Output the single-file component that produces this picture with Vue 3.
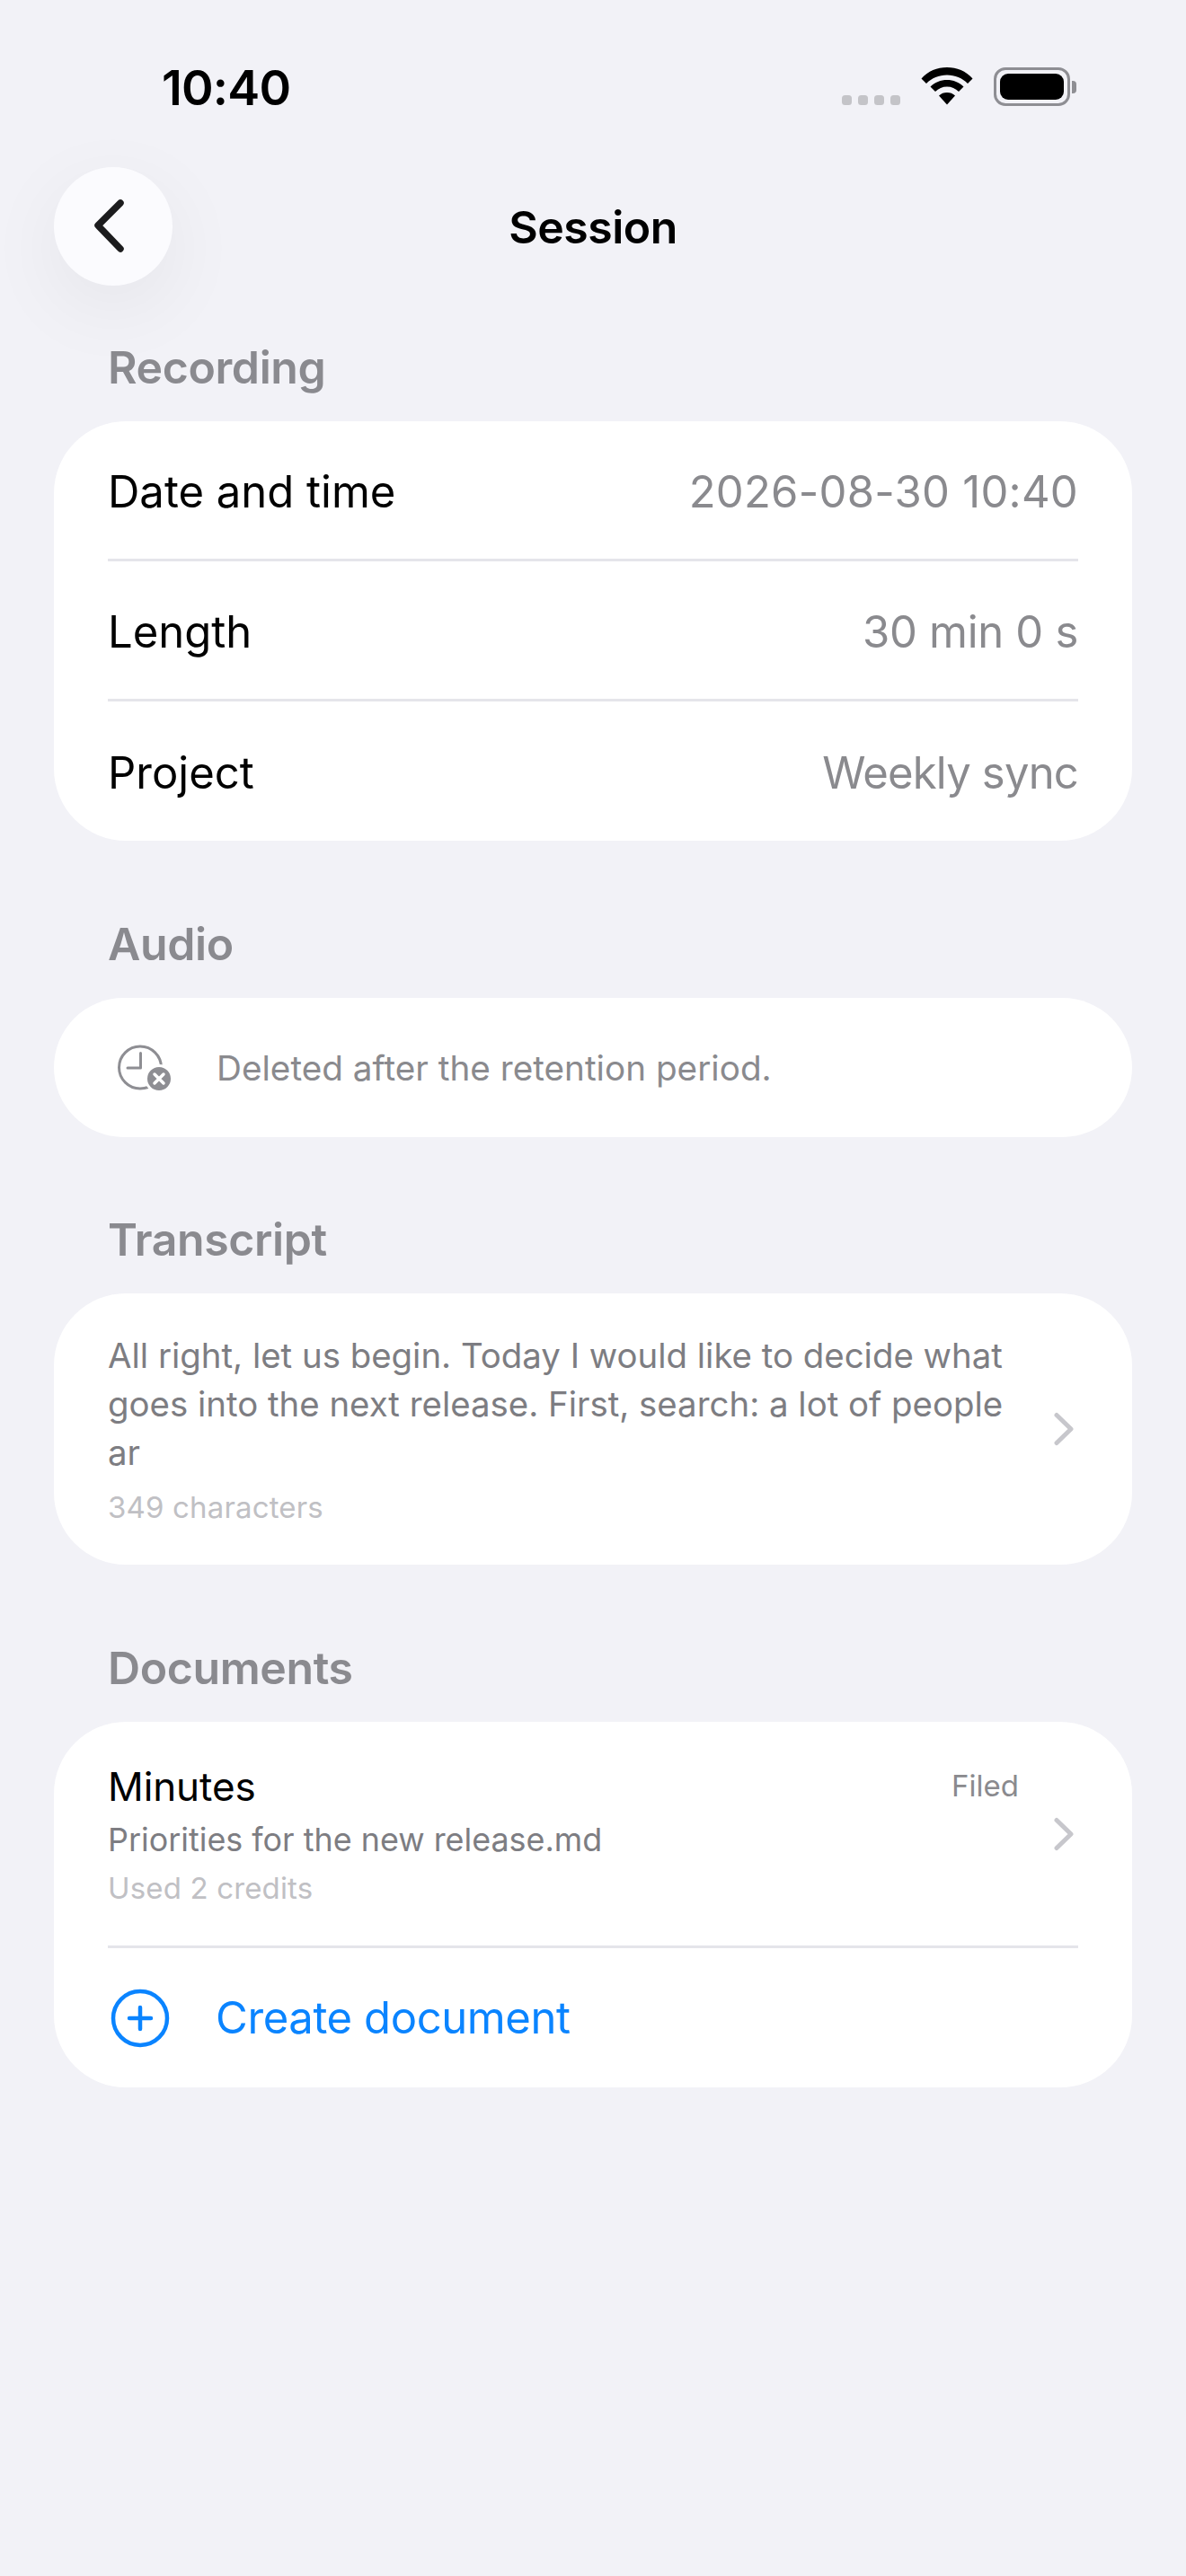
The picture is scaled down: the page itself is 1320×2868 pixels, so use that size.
<script setup>
const recording = [
  { label: 'Date and time', value: '2026-08-30 10:40', tone: 'tight-1' },
  { label: 'Length', value: '30 min 0 s', tone: 'tight-2' },
  { label: 'Project', value: 'Weekly sync', tone: 'tight-3' },
]
</script>

<template>
  <div class="screen">
    <header class="status">
      <span class="time">10:40</span>
      <div class="status-icons">
        <div class="dots"><i></i><i></i><i></i><i></i></div>
        <svg class="wifi" width="58" height="42" viewBox="0 0 58 42">
          <path d="M29 0C18 0 8 4 0.5 12.5L6 18C12 12 20 8.500 29 8.500S46 12 52 18L57.500 12.500C50 4 40 0 29 0Z" />
          <path d="M29 14C22 14 15.500 16.500 10.500 21.500L16 27C19.500 23.500 24 21.500 29 21.500S38.500 23.500 42 27L47.500 21.500C42.500 16.500 36 14 29 14Z" />
          <path d="M29 28C25.500 28 22.500 29 20 31.500L29 41.500L38 31.500C35.500 29 32.500 28 29 28Z" />
        </svg>
        <div class="battery"><div class="battery-fill"></div></div>
        <div class="battery-cap"></div>
      </div>
    </header>

    <nav class="nav">
      <button class="back" aria-label="Back">
        <svg width="36" height="60" viewBox="0 0 36 60">
          <path d="M30 4L5 29L30 55" fill="none" stroke="#1c1c1e" stroke-width="7.500" stroke-linecap="round" stroke-linejoin="round" />
        </svg>
      </button>
      <h1>Session</h1>
    </nav>

    <main class="content">
      <section>
        <h2>Recording</h2>
        <div class="card">
          <div v-for="row in recording" :key="row.label" class="row">
            <span>{{ row.label }}</span>
            <span class="value" :class="row.tone">{{ row.value }}</span>
          </div>
        </div>
      </section>

      <section>
        <h2>Audio</h2>
        <div class="card audio">
          <svg class="lead" width="60" height="52" viewBox="0 0 60 52">
            <circle cx="25" cy="25.500" r="23.500" fill="none" stroke="#8e8e93" stroke-width="3" />
            <path d="M25.500 9.500V26H11" fill="none" stroke="#8e8e93" stroke-width="3" stroke-linecap="round" stroke-linejoin="round" />
            <circle cx="46" cy="38" r="14.500" fill="#8e8e93" stroke="#fff" stroke-width="3" />
            <path d="M41 33L51 43M51 33L41 43" stroke="#fff" stroke-width="3.500" stroke-linecap="round" />
          </svg>
          <span class="audio-text">Deleted after the retention period.</span>
        </div>
      </section>

      <section class="transcript-section">
        <h2>Transcript</h2>
        <div class="card transcript">
          <div class="transcript-text">
            <p>All right, let us begin. Today I would like to decide what goes into the next release. First, search: a lot of people ar</p>
            <small>349 characters</small>
          </div>
          <svg class="chevron" width="24" height="38" viewBox="0 0 24 38">
            <path d="M4 3.500L20 19L4 34.500" fill="none" stroke="#c7c7cc" stroke-width="5" stroke-linecap="round" stroke-linejoin="round" />
          </svg>
        </div>
      </section>

      <section>
        <h2>Documents</h2>
        <div class="card">
          <div class="doc">
            <div class="doc-text">
              <div class="doc-head"><strong>Minutes</strong><em>Filed</em></div>
              <p>Priorities for the new release.md</p>
              <small>Used 2 credits</small>
            </div>
            <svg class="chevron" width="24" height="38" viewBox="0 0 24 38">
              <path d="M4 3.500L20 19L4 34.500" fill="none" stroke="#c7c7cc" stroke-width="5" stroke-linecap="round" stroke-linejoin="round" />
            </svg>
          </div>
          <div class="create">
            <svg width="66" height="66" viewBox="0 0 66 66">
              <circle cx="33" cy="33" r="30" fill="none" stroke="#0a84ff" stroke-width="4.500" />
              <path d="M33 21V45M21 33H45" stroke="#0a84ff" stroke-width="4.500" stroke-linecap="round" />
            </svg>
            <span>Create document</span>
          </div>
        </div>
      </section>
    </main>
  </div>
</template>

<style>
html, body { margin: 0; background: #f2f2f7; }
</style>

<style scoped>
.screen {
  width: 1320px;
  height: 2868px;
  background: #f2f2f7;
  font-family: Inter, "Liberation Sans", sans-serif;
  color: #000;
  overflow: hidden;
}
.status {
  height: 186px;
  box-sizing: border-box;
  padding: 66px 122px 0 180px;
  display: flex;
  justify-content: space-between;
  align-items: flex-start;
}
.time { font-size: 54px; line-height: 64px; font-weight: 600; letter-spacing: -0.8px; white-space: nowrap; }
.status-icons { display: flex; align-items: flex-start; height: 46px; margin-top: 9px; }
.dots { display: flex; gap: 7px; margin-top: 31px; margin-right: 23px; }
.dots i { display: block; width: 11px; height: 11px; border-radius: 3.500px; background: #c4c4c8; }
.wifi { fill: #000; margin-right: 23px; }
.battery { width: 85px; height: 43px; box-sizing: border-box; border: 3px solid #8e8e93; border-radius: 13px; padding: 4px; }
.battery-fill { width: 100%; height: 100%; background: #000; border-radius: 9px; }
.battery-cap { width: 5px; height: 14px; margin-top: 15px; margin-left: 2px; background: #8e8e93; border-radius: 0 4px 4px 0; }

.nav { height: 132px; position: relative; display: flex; align-items: center; justify-content: center; }
.nav h1 { margin: 2px 0 0; font-size: 50px; font-weight: 600; line-height: 60px; letter-spacing: -0.5px; }
.back {
  position: absolute;
  left: 60px;
  top: 0;
  width: 132px;
  height: 132px;
  border: none;
  border-radius: 50%;
  background: #fbfbfe;
  padding: 0 8px 0 0;
  display: flex;
  align-items: center;
  justify-content: center;
  box-shadow: 0 24px 90px rgba(0, 0, 0, 0.06);
}

.content { padding: 0 60px; display: flex; flex-direction: column; gap: 86px; margin-top: 62px; }
.transcript-section { margin-top: -1px; }
h2 { margin: 0 0 31px 60px; font-size: 50px; line-height: 58px; font-weight: 600; color: #8a8a8f; letter-spacing: -0.4px; }
.card { background: #fff; border-radius: 80px; overflow: hidden; }
.row {
  box-sizing: border-box;
  height: 156px;
  padding-top: 3px;
  margin: 0 60px;
  display: flex;
  align-items: center;
  justify-content: space-between;
  font-size: 49px;
  border-bottom: 3px solid #e5e5ea;
}
.row:last-child { border-bottom: none; height: 155px; }
.value { color: #8a8a8e; }
.tight-1 { letter-spacing: 0.25px; }
.tight-2 { letter-spacing: -0.3px; }
.tight-3 { letter-spacing: -0.8px; }

.audio { height: 155px; display: flex; align-items: center; padding-left: 71px; }
.audio-text { margin-left: 50px; font-size: 38.700px; color: #8a8a8e; }

.transcript { height: 302px; display: flex; align-items: center; padding: 0 60px; }
.transcript-text { flex: 1; min-width: 0; padding-right: 40px; }
.transcript-text p { margin: 0; font-size: 38.400px; line-height: 54px; color: #7d7d82; }
small { display: block; font-size: 33px; line-height: 44px; color: #c0c0c4; margin-top: 12px; letter-spacing: 0.15px; }
.chevron { flex: none; margin-right: 4px; }

.doc { box-sizing: border-box; margin: 0 60px; height: 252px; display: flex; align-items: center; border-bottom: 3px solid #e5e5ea; }
.doc-text { flex: 1; align-self: flex-start; padding-right: 38px; padding-top: 43px; }
.doc-head { display: flex; justify-content: space-between; align-items: flex-start; }
.doc-head strong { font-size: 44px; font-weight: 400; line-height: 58px; letter-spacing: -0.1px; }
.doc-head em { font-style: normal; font-size: 33px; line-height: 56px; color: #8a8a8e; }
.doc-text p { margin: 0.500px 0 0; font-size: 35.900px; line-height: 58px; color: #7d7d82; }
.doc-text small { margin-top: 3px; }
.create { height: 155px; margin: 0 60px; padding-left: 3px; display: flex; align-items: center; gap: 51px; font-size: 49px; color: #0a84ff; letter-spacing: -0.4px; }
</style>
